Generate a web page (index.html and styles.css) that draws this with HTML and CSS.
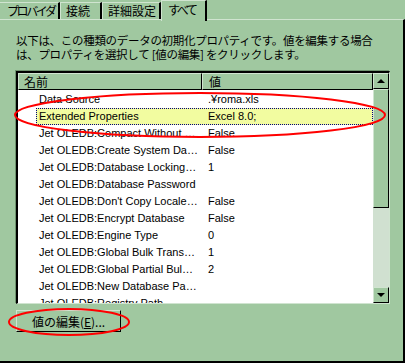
FILE: index.html
```html
<!DOCTYPE html>
<html lang="ja">
<head>
    <meta charset="UTF-8">
    <title>データ リンク プロパティ</title>
    <link rel="stylesheet" href="styles.css">
</head>
<body>
    <div class="dialog">
        <div class="tabs">
            <div class="tab kana">プロバイダ</div>
            <div class="tab">接続</div>
            <div class="tab">詳細設定</div>
            <div class="tab kana active">すべて</div>
        </div>

        <div class="panel">
            <p class="desc">以下は、この種類のデータの初期化プロパティです。値を編集する場合<br>は、プロパティを選択して [値の編集] をクリックします。</p>

            <div class="list">
                <div class="list-body">
                    <div class="list-head">
                        <div class="head-cell name">名前</div>
                        <div class="head-cell value">値</div>
                    </div>
                    <div class="rows" id="rows"></div>
                </div>
                <div class="scrollbar">
                    <div class="sb-btn"><span class="arrow up"></span></div>
                    <div class="sb-thumb"></div>
                    <div class="sb-track"></div>
                    <div class="sb-btn"><span class="arrow down"></span></div>
                </div>
            </div>

            <button class="edit-button">値の編集(<u>E</u>)...</button>
        </div>

        <!-- red marks drawn over the screenshot -->
        <svg class="marks" width="405" height="363" viewBox="0 0 405 363">
            <ellipse cx="200" cy="115" rx="185" ry="22" />
            <ellipse cx="69" cy="322" rx="60" ry="13" />
        </svg>
    </div>

    <script>
        const props = [
            ['Data Source', '.¥roma.xls'],
            ['Extended Properties', 'Excel 8.0;'],
            ['Jet OLEDB:Compact Without Replica Repair', 'False'],
            ['Jet OLEDB:Create System Database', 'False'],
            ['Jet OLEDB:Database Locking Mode', '1'],
            ['Jet OLEDB:Database Password', ''],
            ['Jet OLEDB:Don\'t Copy Locale on Compact', 'False'],
            ['Jet OLEDB:Encrypt Database', 'False'],
            ['Jet OLEDB:Engine Type', '0'],
            ['Jet OLEDB:Global Bulk Transactions', '1'],
            ['Jet OLEDB:Global Partial Bulk Ops', '2'],
            ['Jet OLEDB:New Database Password', ''],
            ['Jet OLEDB:Registry Path', '']
        ];

        const rows = document.getElementById('rows');
        props.forEach((p, i) => {
            const row = document.createElement('div');
            row.className = i === 1 ? 'row selected' : 'row';
            row.innerHTML = `<span class="cell name">${p[0]}</span><span class="cell value">${p[1]}</span>`;
            rows.appendChild(row);
        });
    </script>
</body>
</html>
```

FILE: styles.css
```css
body {
    margin: 0;
    background-color: #a0c8a0;
    font-family: "Liberation Sans", "Noto Sans CJK JP", sans-serif;
    font-size: 11px;
    color: #000;
}

.dialog {
    position: relative;
    width: 405px;
    height: 363px;
    overflow: hidden;
}

.tabs {
    display: flex;
    height: 19px;
}

.tab {
    box-sizing: border-box;
    height: 17px;
    margin-top: 2px;
    padding-left: 5px;
    line-height: 15px;
    white-space: nowrap;
    font-family: "Noto Sans CJK JP", sans-serif;
    font-size: 12px;
    border-left: 1px solid #d0e4d0;
    border-top: 1px solid #d0e4d0;
    border-right: 2px solid #000;
}

.tab.kana {
    letter-spacing: -2.4px;
}

.tab:nth-child(1) {
    width: 60px;
    padding-left: 7px;
    border-left: none;
}

.tab:nth-child(2) { width: 42px; }
.tab:nth-child(3) { width: 59px; }

.tab.active {
    position: relative;
    z-index: 1;
    width: 46px;
    height: 21px;
    margin-top: 0;
    padding-left: 6px;
    line-height: 17px;
    background-color: #a0c8a0;
}

.panel {
    box-sizing: border-box;
    height: 344px;
    padding-left: 16px;
    border-top: 1px solid #d0e4d0;
    border-right: 2px solid #000;
    border-bottom: 2px solid #000;
}

.desc {
    margin: 0;
    padding-top: 13px;
    line-height: 14px;
    font-family: "Noto Sans CJK JP", sans-serif;
    font-size: 11.5px;
    letter-spacing: -0.3px;
}

.list {
    display: flex;
    box-sizing: border-box;
    width: 374px;
    height: 233px;
    margin-top: 10px;
    border-top: 2px solid #000;
    border-left: 2px solid #000;
    border-right: 1px solid #d0e4d0;
    border-bottom: 1px solid #d0e4d0;
    box-shadow: -1px -1px 0 #6f946f;
    background-color: #fff;
}

.list-body {
    flex: 1;
    overflow: hidden;
}

.list-head {
    display: flex;
    height: 17px;
}

.head-cell {
    box-sizing: border-box;
    background-color: #a0c8a0;
    border-top: 1px solid #d0e4d0;
    border-left: 1px solid #d0e4d0;
    border-right: 1px solid #000;
    border-bottom: 1px solid #000;
    line-height: 15px;
    font-family: "Noto Sans CJK JP", sans-serif;
    font-size: 12px;
}

.head-cell.name {
    width: 184px;
    padding-left: 5px;
}

.head-cell.value {
    flex: 1;
    padding-left: 6px;
}

.rows {
    padding-top: 1px;
}

.row {
    display: flex;
    height: 17px;
    line-height: 17px;
}

.cell {
    white-space: nowrap;
    overflow: hidden;
    text-overflow: ellipsis;
}

.cell.name {
    box-sizing: border-box;
    width: 166px;
    margin-left: 18px;
    padding-left: 3px;
    padding-right: 4px;
}

.cell.value {
    flex: 1;
    padding-left: 6px;
}

.row.selected {
    margin-left: 18px;
    background-color: #f2fca0;
    outline: 1px dotted #000080;
    outline-offset: -1px;
}

.row.selected .cell.name {
    margin-left: 0;
}

.scrollbar {
    display: flex;
    flex-direction: column;
    width: 16px;
}

.sb-btn,
.sb-thumb {
    box-sizing: border-box;
    background-color: #a0c8a0;
    border-top: 1px solid #d0e4d0;
    border-left: 1px solid #d0e4d0;
    border-right: 1px solid #000;
    border-bottom: 1px solid #000;
}

.sb-btn {
    display: flex;
    align-items: center;
    justify-content: center;
    height: 16px;
}

.sb-thumb {
    height: 119px;
}

.sb-track {
    flex: 1;
    background-color: #d0e0d0;
}

.arrow {
    width: 0;
    height: 0;
    border-left: 4px solid transparent;
    border-right: 4px solid transparent;
}

.arrow.up {
    border-bottom: 4px solid #000;
}

.arrow.down {
    border-top: 4px solid #000;
}

.edit-button {
    display: block;
    width: 105px;
    height: 22px;
    margin-top: 6px;
    padding: 0;
    background-color: #a0c8a0;
    border-top: 1px solid #d0e4d0;
    border-left: 1px solid #d0e4d0;
    border-right: 1px solid #000;
    border-bottom: 1px solid #000;
    font-family: "Noto Sans CJK JP", sans-serif;
    font-size: 12px;
    color: #000;
}

.marks {
    position: absolute;
    left: 0;
    top: 0;
    pointer-events: none;
}

.marks ellipse {
    fill: none;
    stroke: #ff0000;
    stroke-width: 2;
}
```
